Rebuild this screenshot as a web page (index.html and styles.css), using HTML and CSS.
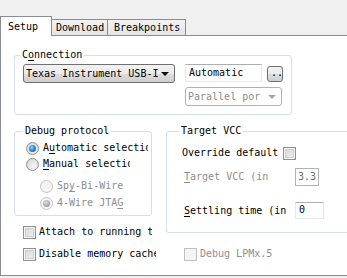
FILE: index.html
```html
<!DOCTYPE html>
<html lang="en">
<head>
    <meta charset="UTF-8">
    <title>Debugger Setup</title>
    <link rel="stylesheet" href="styles.css">
</head>
<body>
    <div class="tabs">
        <div class="tab tab-on">Setup</div>
        <div class="tab tab-dl">Download</div>
        <div class="tab tab-bp">Breakpoints</div>
    </div>

    <div class="page">
        <fieldset class="group conn">
            <legend>C<u>o</u>nnection</legend>
            <div class="conn-row">
                <div class="combo combo-main">
                    <span class="combo-text">Texas Instrument USB-I</span>
                    <span class="arrow"></span>
                </div>
                <div class="conn-right">
                    <div class="port-row">
                        <div class="edit edit-auto">Automatic</div>
                        <div class="btn-small">..</div>
                    </div>
                    <div class="combo combo-off">
                        <span class="combo-text">Parallel por</span>
                        <span class="arrow"></span>
                    </div>
                </div>
            </div>
        </fieldset>

        <div class="mid">
            <div class="left-col">
                <fieldset class="group debug">
                    <legend>Debug protocol</legend>
                    <div class="opt">
                        <span class="radio checked"></span>
                        <span class="opt-text w-auto">A<u>u</u>tomatic selection</span>
                    </div>
                    <div class="opt">
                        <span class="radio"></span>
                        <span class="opt-text w-manual"><u>M</u>anual selection</span>
                    </div>
                    <div class="sub">
                        <div class="opt off">
                            <span class="radio"></span>
                            <span class="opt-text">Sp<u>y</u>-Bi-Wire</span>
                        </div>
                        <div class="opt off opt-last">
                            <span class="radio checked"></span>
                            <span class="opt-text">4-Wire JTA<u>G</u></span>
                        </div>
                    </div>
                </fieldset>
                <div class="opt opt-check attach">
                    <span class="check"></span>
                    <span class="opt-text w-check">Attach to running target</span>
                </div>
            </div>

            <fieldset class="group vcc">
                <legend>Target VCC</legend>
                <div class="vcc-row first">
                    <span class="vcc-override">Override default</span>
                    <span class="check"></span>
                </div>
                <div class="vcc-row off">
                    <span class="vcc-label"><u>T</u>arget VCC (in</span>
                    <div class="edit edit-vcc">3.3</div>
                </div>
                <div class="vcc-row settle">
                    <span class="vcc-label"><u>S</u>ettling time (in</span>
                    <div class="edit edit-settle">0</div>
                </div>
            </fieldset>
        </div>

        <div class="bottom">
            <div class="opt opt-check cache">
                <span class="check"></span>
                <span class="opt-text w-check">Disable memory cache</span>
            </div>
            <div class="opt opt-check off">
                <span class="check"></span>
                <span class="opt-text">Debug LPMx.5</span>
            </div>
        </div>
    </div>
</body>
</html>
```

FILE: styles.css
```css
* {
    box-sizing: border-box;
}

body {
    margin: 0;
    width: 347px;
    height: 278px;
    overflow: hidden;
    background-color: #f0f0f0;
    font-family: "DejaVu Sans Mono", "Liberation Mono", monospace;
    font-size: 10px;
    line-height: 12px;
    color: #000;
}

u {
    text-underline-offset: 2px;
}

/* tab strip */

.tabs {
    display: flex;
    align-items: flex-end;
    height: 35px;
}

.tab {
    height: 16px;
    padding-top: 2px;
    border: 1px solid #898c95;
    border-bottom: none;
    background: linear-gradient(#f3f3f3, #e4e4e4);
    white-space: nowrap;
}

.tab-on {
    position: relative;
    z-index: 1;
    width: 52px;
    height: 20px;
    margin-bottom: -1px;
    padding: 4px 0 0 7px;
    background: #fff;
}

.tab-dl {
    width: 56px;
    padding-left: 4px;
    border-left: none;
}

.tab-bp {
    width: 78px;
    padding-left: 6px;
    border-left: none;
}

.page {
    width: 360px;
    height: 241px;
    padding: 13px 0 0 13px;
    background: #fff;
    border: 1px solid #898c95;
    border-right: none;
}

/* group boxes */

.group {
    margin: 0;
    border: 1px solid #d5dfe5;
    border-radius: 3px;
    min-width: 0;
}

.group legend {
    padding: 0 2px;
    margin-left: -3px;
    line-height: 12px;
}

.conn {
    width: 278px;
    padding: 3px 8px 8px 8px;
}

.conn-row {
    display: flex;
    align-items: flex-start;
    gap: 10px;
}

.conn-right {
    display: flex;
    flex-direction: column;
    gap: 5px;
}

.port-row {
    display: flex;
    align-items: center;
    gap: 5px;
}

.combo {
    display: flex;
    align-items: center;
    justify-content: space-between;
    height: 19px;
    padding: 0 4px 0 2px;
    border: 1px solid #707070;
    border-radius: 3px;
    background: linear-gradient(#f2f2f2 0%, #ebebeb 50%, #dddddd 51%, #cfcfcf 100%);
    white-space: nowrap;
    overflow: hidden;
}

.combo-main {
    width: 155px;
}

.combo-off {
    width: 97px;
    border-color: #adb2b5;
    background: #fff;
    color: #8d8d8d;
}

.arrow {
    flex: none;
    width: 0;
    height: 0;
    margin-right: 1px;
    border-left: 4px solid transparent;
    border-right: 4px solid transparent;
    border-top: 4px solid #000;
}

.combo-off .arrow {
    border-top-color: #a6a6a6;
}

.edit {
    height: 18px;
    padding: 2px 3px;
    border: 1px solid #e3e9ef;
    border-top-color: #abadb3;
    background: #fff;
    white-space: nowrap;
}

.edit-auto {
    width: 77px;
}

.btn-small {
    width: 16px;
    height: 16px;
    margin-top: 1px;
    padding-left: 3px;
    line-height: 12px;
    border: 1px solid #707070;
    border-radius: 3px;
    background: linear-gradient(#f2f2f2 0%, #ebebeb 50%, #dddddd 51%, #cfcfcf 100%);
}

/* middle area */

.mid {
    display: flex;
    align-items: flex-start;
    gap: 14px;
    margin-top: 10px;
}

.left-col {
    width: 138px;
}

.debug {
    width: 138px;
    padding: 3px 0 4px 11px;
}

.opt {
    display: flex;
    align-items: center;
    height: 16px;
    white-space: nowrap;
}

.opt-text {
    margin-left: 4px;
    overflow: hidden;
}

.w-auto {
    width: 105px;
}

.w-manual {
    width: 87px;
}

.sub {
    margin-top: 6px;
    padding-left: 14px;
}

.opt-last {
    margin-top: 1px;
}

.off {
    color: #8d8d8d;
}

.radio {
    flex: none;
    position: relative;
    width: 13px;
    height: 13px;
    border: 1px solid #8e8f8f;
    border-radius: 50%;
    background: radial-gradient(circle at 60% 65%, #f6f6f6 0%, #dcdcdc 70%, #cfcfcf 100%);
}

.radio.checked::after {
    content: '';
    position: absolute;
    left: 2px;
    top: 2px;
    width: 7px;
    height: 7px;
    border-radius: 50%;
    background: radial-gradient(circle at 40% 35%, #8fd2ff 0%, #2a8fe0 45%, #1b4d80 100%);
}

.off .radio {
    border-color: #c5c5c5;
    background: #f4f4f4;
}

.off .radio.checked::after {
    background: radial-gradient(circle at 40% 35%, #e0e0e0 0%, #a8a8a8 60%, #8e8e8e 100%);
}

.check {
    flex: none;
    width: 13px;
    height: 13px;
    border: 1px solid #8e8f8f;
    background: linear-gradient(135deg, #d4d4d4 0%, #f3f3f3 100%);
    box-shadow: inset 0 0 0 1px #f4f4f4, inset 0 0 0 2px #cfcfcf;
}

.off .check {
    border-color: #c0c0c0;
    background: #f4f4f4;
    box-shadow: none;
}

.opt-check .opt-text {
    margin-left: 3px;
}

.attach {
    margin-top: 8px;
    padding-left: 9px;
}

.w-check {
    width: 117px;
}

/* target vcc */

.vcc {
    width: 200px;
    padding: 8px 0 13px 15px;
}

.vcc-row {
    display: flex;
    align-items: center;
    height: 16px;
    white-space: nowrap;
}

.vcc-override {
    margin-right: 5px;
}

.vcc-row.off {
    height: 18px;
    margin-top: 7px;
}

.vcc-row.settle {
    height: 17px;
    margin-top: 16px;
}

.vcc-label {
    width: 113px;
    padding-left: 2px;
}

.edit-vcc {
    width: 24px;
    height: 18px;
    padding: 2px 2px;
    border-color: #adb2b5;
    color: #6d6d6d;
    background: #fff;
}

.edit-settle {
    width: 29px;
    height: 17px;
    padding: 1px 3px;
}

/* bottom row */

.bottom {
    display: flex;
    margin-top: 6px;
    padding-left: 9px;
}

.cache {
    width: 161px;
}
```
